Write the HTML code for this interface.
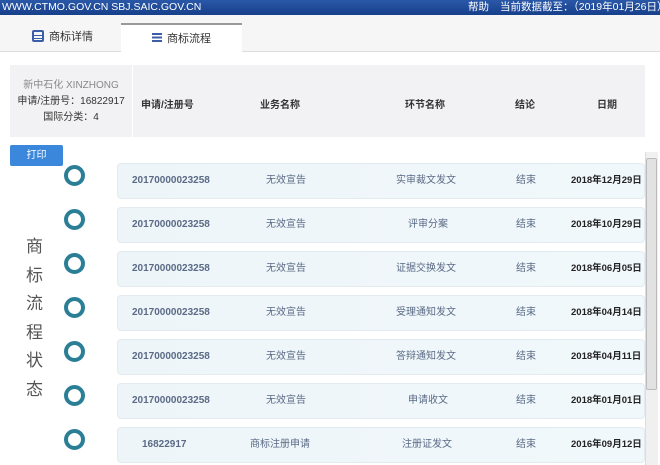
<!DOCTYPE html>
<html><head><meta charset="utf-8"><style>
*{margin:0;padding:0;box-sizing:border-box}
body{width:660px;height:465px;overflow:hidden;background:#fff;font-family:"Liberation Sans","Noto Sans CJK SC",sans-serif;position:relative;white-space:nowrap}
.top{position:absolute;left:0;top:0;width:660px;height:15px;background:linear-gradient(#2a58a8,#173f8a);color:#fff;font-size:10.5px;line-height:15px;overflow:hidden}
.tabs{position:absolute;left:0;top:15px;width:660px;height:37px;background:#f6f6f7;border-bottom:1px solid #ddd}
.tab{position:absolute;top:8px;height:29px;font-size:11px;color:#333;line-height:29px}
.t2{left:121px;width:121px;background:#fff;border-top:2px solid #999;text-align:center}
.head{position:absolute;left:10px;top:65px;width:635px;height:72px;background:#f2f2f4}
.info{position:absolute;left:10px;top:65px;width:123px;height:72px;text-align:center;font-size:10px;color:#333;line-height:16px;padding-top:13px;border-right:1px solid #fff}
.h{position:absolute;top:96px;font-size:10px;font-weight:bold;color:#333}
.btn{position:absolute;left:10px;top:145px;width:53px;height:21px;background:#3a87db;color:#fff;font-size:10px;text-align:center;line-height:21px;border-radius:2px}
.vt{position:absolute;left:26px;top:233px;font-size:17px;color:#555;width:20px;line-height:28.5px;white-space:normal}
.row{position:absolute;left:117px;width:528px;height:36px;background:linear-gradient(90deg,#eef5f9,#f1f8fb);border:1px solid #e2ebf0;border-radius:4px;font-size:10px;color:#5a6a86;line-height:34px;overflow:hidden}
.row span{position:absolute}
.row span.d{left:453px;color:#222;font-weight:bold;font-size:9.5px}
.c{position:absolute;left:64px;width:21px;height:21px;border:4px solid #2a7f96;border-radius:50%}
.sb{position:absolute;left:645px;top:152px;width:13px;height:313px;background:#f0f0f0;border-left:1px solid #ddd}
.th{position:absolute;left:646px;top:158px;width:11px;height:232px;background:#e2e2e2;border:1px solid #bbb;border-radius:2px}
</style></head><body>
<div class="top"><span style="position:absolute;left:2px">WWW.CTMO.GOV.CN SBJ.SAIC.GOV.CN</span><span style="position:absolute;left:468px">帮助</span><span style="position:absolute;left:500px">当前数据截至：（2019年01月26日）</span></div>
<div class="tabs">
<div class="tab" style="left:32px"><span style="display:inline-block;width:12px;height:12px;border:2px solid #3c5da8;border-radius:2px;vertical-align:-2px;margin-right:5px;background:linear-gradient(#3c5da8,#3c5da8) 0 3px/100% 1px no-repeat,linear-gradient(#3c5da8,#3c5da8) 0 6px/100% 1px no-repeat"></span>商标详情</div>
<div class="tab t2"><span style="display:inline-block;width:10px;height:10px;background:repeating-linear-gradient(#3c5da8 0 2px,#fff 2px 3.5px);vertical-align:-1px;margin-right:5px"></span>商标流程</div>
</div>
<div class="head"></div>
<div class="info"><div style="color:#888">新中石化 XINZHONG</div><div>申请/注册号：16822917</div><div>国际分类：4</div></div>
<div class="h" style="left:141px">申请/注册号</div>
<div class="h" style="left:260px">业务名称</div>
<div class="h" style="left:405px">环节名称</div>
<div class="h" style="left:515px">结论</div>
<div class="h" style="left:597px">日期</div>
<div class="btn">打印</div>
<div class="vt">商标流程状态</div>
<div class="c" style="top:165px"></div><div class="c" style="top:209px"></div><div class="c" style="top:253px"></div><div class="c" style="top:297px"></div><div class="c" style="top:341px"></div><div class="c" style="top:385px"></div><div class="c" style="top:429px"></div>
<div class="row" style="top:163px"><span style="left:14px;font-weight:bold">20170000023258</span><span style="left:148px">无效宣告</span><span style="left:278px">实审裁文发文</span><span style="left:398px">结束</span><span class="d">2018年12月29日</span></div>
<div class="row" style="top:207px"><span style="left:14px;font-weight:bold">20170000023258</span><span style="left:148px">无效宣告</span><span style="left:290px">评审分案</span><span style="left:398px">结束</span><span class="d">2018年10月29日</span></div>
<div class="row" style="top:251px"><span style="left:14px;font-weight:bold">20170000023258</span><span style="left:148px">无效宣告</span><span style="left:278px">证据交换发文</span><span style="left:398px">结束</span><span class="d">2018年06月05日</span></div>
<div class="row" style="top:295px"><span style="left:14px;font-weight:bold">20170000023258</span><span style="left:148px">无效宣告</span><span style="left:278px">受理通知发文</span><span style="left:398px">结束</span><span class="d">2018年04月14日</span></div>
<div class="row" style="top:339px"><span style="left:14px;font-weight:bold">20170000023258</span><span style="left:148px">无效宣告</span><span style="left:278px">答辩通知发文</span><span style="left:398px">结束</span><span class="d">2018年04月11日</span></div>
<div class="row" style="top:383px"><span style="left:14px;font-weight:bold">20170000023258</span><span style="left:148px">无效宣告</span><span style="left:290px">申请收文</span><span style="left:398px">结束</span><span class="d">2018年01月01日</span></div>
<div class="row" style="top:427px"><span style="left:24px;font-weight:bold">16822917</span><span style="left:132px">商标注册申请</span><span style="left:284px">注册证发文</span><span style="left:398px">结束</span><span class="d">2016年09月12日</span></div>
<div class="sb"></div><div class="th"></div>
</body></html>
